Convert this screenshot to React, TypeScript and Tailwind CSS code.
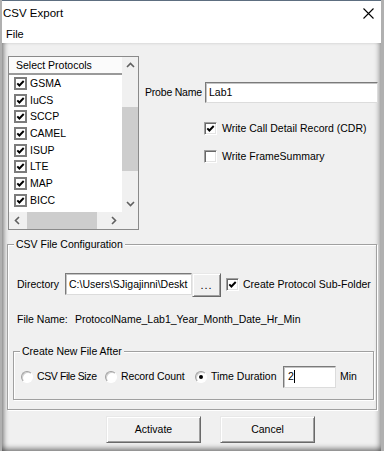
import React from "react";

const Check = () => (
  <svg width="9" height="9" viewBox="0 0 9 9">
    <polyline points="1.3,4.3 3.4,6.5 7.7,2" fill="none" stroke="#000" strokeWidth="1.9" />
  </svg>
);

const ListCheckbox = () => (
  <span className="w-[13px] h-[13px] shrink-0 border-2 border-[#7c7c7c] bg-white flex items-center justify-center">
    <Check />
  </span>
);

const Checkbox = ({ checked }: { checked?: boolean }) => (
  <span className="w-[13px] h-[13px] shrink-0 border border-t-[#a0a0a0] border-l-[#a0a0a0] border-b-white border-r-white bg-white shadow-[inset_1px_1px_0_#696969,inset_-1px_-1px_0_#e3e3e3] flex items-center justify-center">
    {checked && <Check />}
  </span>
);

const Radio = ({ checked }: { checked?: boolean }) => (
  <span className="w-[12px] h-[12px] shrink-0 rounded-full border border-t-[#a0a0a0] border-l-[#a0a0a0] border-b-white border-r-white bg-white shadow-[inset_1px_1px_0_#d0d0d0] flex items-center justify-center">
    {checked && <span className="w-[4px] h-[4px] rounded-full bg-black" />}
  </span>
);

const Chevron = ({ dir }: { dir: "up" | "down" | "left" | "right" }) => {
  const pts: Record<string, string> = {
    up: "1,6 4.5,2.5 8,6",
    down: "1,3 4.5,6.5 8,3",
    left: "6,1 2.5,4.5 6,8",
    right: "3,1 6.5,4.5 3,8",
  };
  return (
    <svg width="9" height="9" viewBox="0 0 9 9">
      <polyline points={pts[dir]} fill="none" stroke="#606060" strokeWidth="1.6" />
    </svg>
  );
};

const protocols = ["GSMA", "IuCS", "SCCP", "CAMEL", "ISUP", "LTE", "MAP", "BICC"];

const inputCls =
  "bg-white border border-t-[#7a7a7a] border-l-[#7a7a7a] border-b-[#dcdcdc] border-r-[#dcdcdc] shadow-[inset_1px_1px_0_#c4c4c4] flex items-center overflow-hidden whitespace-nowrap";

const buttonCls =
  "bg-[#f0f0f0] border border-t-[#e8e8e8] border-l-[#e8e8e8] border-b-[#696969] border-r-[#696969] shadow-[inset_1px_1px_0_#ffffff,inset_-1px_-1px_0_#a0a0a0] flex items-center justify-center";

export default function App() {
  return (
    <div className="w-[384px] h-[451px] flex flex-col bg-[#f0f0f0] overflow-hidden whitespace-nowrap font-['Liberation_Sans',Arial,sans-serif] text-[10.5px] leading-[13px] text-black border-l-2 border-r-[3px] border-[#b0b0b0]">
      {/* Title bar */}
      <div className="h-[26px] shrink-0 bg-white border-t border-t-[#5d6e80] flex items-center justify-between pl-[1px] pr-[7px]">
        <span className="text-[11.5px]">CSV Export</span>
        <svg width="11" height="11" viewBox="0 0 11 11">
          <path d="M0.5 0.5 L10.5 10.5 M10.5 0.5 L0.5 10.5" stroke="#000" strokeWidth="1.1" />
        </svg>
      </div>
      {/* Menu */}
      <div className="h-[17px] shrink-0 bg-white flex items-center pl-[4px]">
        <span className="text-[11px]">File</span>
      </div>

      {/* Body */}
      <div className="flex-1 flex flex-col shadow-[inset_5px_0_5px_-3px_rgba(0,0,0,0.45),inset_-5px_0_5px_-3px_rgba(0,0,0,0.35),inset_0_-6px_5px_-3px_rgba(0,0,0,0.4)]">
        {/* Top section */}
        <div className="flex pt-[13px] pl-[6px]">
          {/* Listbox */}
          <div className="w-[131px] h-[174px] shrink-0 border border-[#8a8a8a] bg-white grid grid-cols-[113px_16px] grid-rows-[155px_17px]">
            <div className="flex flex-col overflow-hidden">
              <div className="h-[18px] shrink-0 border-b-2 border-[#9a9a9a] bg-[#fbfbfb] flex items-center pl-[7px]">
                Select Protocols
              </div>
              {protocols.map((p) => (
                <div key={p} className="h-[16.7px] shrink-0 flex items-center pl-[5px]">
                  <ListCheckbox />
                  <span className="ml-[3px]">{p}</span>
                </div>
              ))}
            </div>
            {/* vertical scrollbar */}
            <div className="bg-[#f0f0f0] flex flex-col">
              <div className="h-[17px] flex items-center justify-center">
                <Chevron dir="up" />
              </div>
              <div className="flex-1 flex flex-col">
                <div className="h-[33px]" />
                <div className="h-[64px] bg-[#cdcdcd]" />
              </div>
              <div className="h-[17px] flex items-center justify-center">
                <Chevron dir="down" />
              </div>
            </div>
            {/* horizontal scrollbar */}
            <div className="bg-[#f0f0f0] flex items-stretch">
              <div className="w-[17px] flex items-center justify-center">
                <Chevron dir="left" />
              </div>
              <div className="flex-1 flex items-stretch">
                <div className="w-[1px]" />
                <div className="w-[70px] bg-[#cdcdcd]" />
              </div>
              <div className="w-[17px] flex items-center justify-center">
                <Chevron dir="right" />
              </div>
            </div>
            <div className="bg-[#f0f0f0]" />
          </div>

          {/* Right column */}
          <div className="flex flex-col pl-[6px]">
            <div className="flex items-center mt-[26px]">
              <span className="w-[60px] tracking-[-0.2px]">Probe Name</span>
              <div className={`${inputCls} w-[173px] h-[21px] pl-[3px]`}>Lab1</div>
            </div>
            <div className="flex items-center mt-[17px] h-[16px] pl-[59px]">
              <Checkbox checked />
              <span className="ml-[5px]">Write Call Detail Record (CDR)</span>
            </div>
            <div className="flex items-center mt-[12px] h-[16px] pl-[59px]">
              <Checkbox />
              <span className="ml-[5px]">Write FrameSummary</span>
            </div>
          </div>
        </div>

        {/* CSV File Configuration group */}
        <div className="relative ml-[5px] mt-[14px] w-[370px] h-[166px] border border-[#a0a0a0] shadow-[1px_1px_0_#ffffff,inset_1px_1px_0_#ffffff] flex flex-col pl-[9px]">
          <span className="absolute -top-[7px] left-[6px] px-[2px] bg-[#f0f0f0]">CSV File Configuration</span>
          <div className="flex items-start mt-[28px]">
            <span className="w-[48px] h-[22px] flex items-center">Directory</span>
            <div className={`${inputCls} w-[127px] h-[22px] pl-[3px]`}>C:\Users\SJigajinni\Deskt</div>
            <div className={`${buttonCls} w-[29px] h-[24px] text-[11px] tracking-[1px]`}>...</div>
            <div className="flex items-center h-[22px] ml-[5px]">
              <Checkbox checked />
              <span className="ml-[4px]">Create Protocol Sub-Folder</span>
            </div>
          </div>
          <div className="flex items-center h-[14px] mt-[15px]">
            <span className="w-[58px]">File Name:</span>
            <span>ProtocolName_Lab1_Year_Month_Date_Hr_Min</span>
          </div>

          {/* Create New File After group */}
          <div className="relative ml-[-4px] mt-[25px] w-[361px] h-[49px] border border-[#a0a0a0] shadow-[1px_1px_0_#ffffff,inset_1px_1px_0_#ffffff] flex items-center pl-[7px]">
            <span className="absolute -top-[7px] left-[6px] px-[2px] bg-[#f0f0f0]">Create New File After</span>
            <div className="flex items-center mt-[2px] h-[22px]">
              <Radio />
              <span className="ml-[4px] w-[68px] tracking-[-0.4px]">CSV File Size</span>
              <Radio />
              <span className="ml-[4px] w-[74px] tracking-[-0.1px]">Record Count</span>
              <Radio checked />
              <span className="ml-[4px] w-[72px]">Time Duration</span>
              <div className={`${inputCls} w-[53px] h-[22px] pl-[4px]`}>
                <span>2</span>
                <span className="w-[1px] h-[13px] bg-black" />
              </div>
              <span className="ml-[4px]">Min</span>
            </div>
          </div>
        </div>

        {/* Buttons */}
        <div className="flex pl-[104px] mt-[6px]">
          <div className={`${buttonCls} w-[95px] h-[27px]`}>Activate</div>
          <div className={`${buttonCls} w-[95px] h-[27px] ml-[19px]`}>Cancel</div>
        </div>
      </div>
    </div>
  );
}
